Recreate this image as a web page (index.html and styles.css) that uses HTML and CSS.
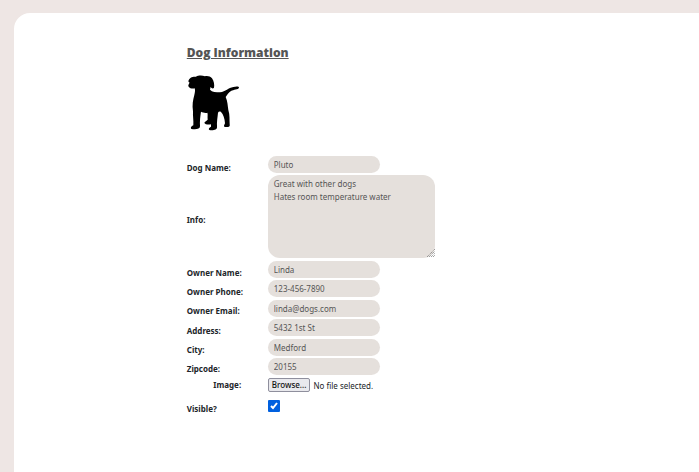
FILE: index.html
```html
<!DOCTYPE html>
<html lang="en">
<head>
<meta charset="utf-8">
<title>Dog Information</title>
<link rel="stylesheet" href="styles.css">
</head>
<body>
<main class="panel">
  <form class="dog-form">
    <h1 class="title">Dog Information</h1>
    <svg class="dog" viewBox="0 0 180 198" role="img" aria-label="Dog silhouette">
      <path d="M14 31 C18 21 27 20 36 20 C43 16 55 16 63 19 C70 17 79 19 84 25 C90 34 92 45 90 53 C87 57 82 55 80 50 L78 59 C84 66 96 67 108 67 C125 65 133 53 148 51 C157 48 166 49 165 53 C162 59 149 58 141 63 C134 68 129 75 125 81 C131 94 131 107 133 120 C138 135 136 150 137 162 C139 170 134 172 122 171 C118 168 121 165 123 160 C122 145 118 133 111 126 C108 124 104 124 102 128 C101 140 98 155 99 171 C100 179 88 182 76 180 C72 176 76 173 81 170 L81 163 C74 165 62 163 61 158 C63 154 68 153 71 149 C70 138 72 132 70 128 C63 130 56 127 51 125 C49 138 47 154 48 169 C48 178 35 179 22 177 C18 173 22 169 28 166 C29 151 26 136 27 124 C24 105 27 89 31 75 C33 66 34 61 32 55 C26 57 17 55 14 50 C11 46 15 41 17 38 C14 37 12 34 14 31 Z"/>
    </svg>
    <div class="fields">
      <div class="row">
        <label class="label" for="dog-name">Dog Name:</label>
        <input class="text" id="dog-name" type="text" value="Pluto">
      </div>
      <div class="row">
        <label class="label" for="info">Info:</label>
        <div class="area-wrap">
          <textarea class="text area" id="info">Great with other dogs
Hates room temperature water</textarea>
          <svg class="grip" viewBox="0 0 8 8" aria-hidden="true">
            <path d="M0 8 L8 0 M2 8 L8 2 M4 8 L8 4 M6 8 L8 6"/>
          </svg>
        </div>
      </div>
    </div>
    <div class="fields owner">
      <div class="row">
        <label class="label" for="owner-name">Owner Name:</label>
        <input class="text" id="owner-name" type="text" value="Linda">
      </div>
      <div class="row">
        <label class="label" for="owner-phone">Owner Phone:</label>
        <input class="text" id="owner-phone" type="text" value="123-456-7890">
      </div>
      <div class="row">
        <label class="label" for="owner-email">Owner Email:</label>
        <input class="text" id="owner-email" type="text" value="linda@dogs.com">
      </div>
      <div class="row">
        <label class="label" for="address">Address:</label>
        <input class="text" id="address" type="text" value="5432 1st St">
      </div>
      <div class="row">
        <label class="label" for="city">City:</label>
        <input class="text" id="city" type="text" value="Medford">
      </div>
      <div class="row">
        <label class="label" for="zipcode">Zipcode:</label>
        <input class="text" id="zipcode" type="text" value="20155">
      </div>
    </div>
    <div class="row image-row">
      <label class="label centered" for="image">Image:</label>
      <div class="file">
        <button class="browse" type="button" tabindex="-1">Browse...</button>
        <span>No file selected.</span>
        <input class="file-input" id="image" type="file">
      </div>
    </div>
    <div class="row">
      <label class="label" for="visible">Visible?</label>
      <span class="check">
        <input class="check-box" id="visible" type="checkbox" checked>
        <svg class="tick" viewBox="0 0 12 12" aria-hidden="true"><path d="M3 6 L5 8 L9 3"/></svg>
      </span>
    </div>
  </form>
</main>
</body>
</html>
```

FILE: styles.css
```css
* {
  box-sizing: border-box;
}

body {
  margin: 0;
  background: #eee6e4;
  color: #212529;
  font: 8px/13px "Noto Sans", "Open Sans", sans-serif;
}

.panel {
  min-height: calc(100vh - 13px);
  margin: 13px 0 0 14px;
  padding: 32px 0 32px calc(25% - 2px);
  border-top-left-radius: 16px;
  background: #fff;
}

.dog-form {
  display: flex;
  flex-direction: column;
  align-items: flex-start;
}

.title {
  margin: 0;
  color: #555;
  font-family: "Open Sans", sans-serif;
  font-size: 12px;
  font-weight: 800;
  line-height: 16px;
  text-decoration: underline;
}

.dog {
  width: 60px;
  height: 66px;
  margin: 9px 0 20px -3px;
}

.fields {
  display: flex;
  flex-direction: column;
  gap: 2px;
}

.owner {
  justify-content: space-between;
  min-height: 114px;
  margin-top: 3px;
}

.row {
  display: grid;
  grid-template-columns: 81px auto;
  align-items: center;
}

.label {
  padding-top: 5px;
  font-weight: 700;
  line-height: 11px;
}

.centered {
  padding: 0 0 2px;
  text-align: center;
}

.text {
  display: block;
  width: 112px;
  height: 17px;
  margin: 0;
  padding: 0 6px;
  border: 0;
  border-radius: 12px;
  background: #e5e0dc;
  color: #555;
  font: inherit;
}

.area-wrap {
  position: relative;
}

.area {
  width: 167px;
  height: 83px;
  padding: 2px 6px;
  resize: none;
}

.grip {
  position: absolute;
  right: 0;
  bottom: 1px;
  width: 8px;
  height: 8px;
  fill: none;
  stroke: #777;
  stroke-dasharray: 1 1;
}

.image-row {
  margin: 3px 0 6px;
}

.file {
  position: relative;
  display: flex;
  align-items: center;
  gap: 3px;
}

.browse {
  height: 14px;
  padding: 0 3px;
  border: 1px solid #8f8f9d;
  border-radius: 2px;
  background: #e9e9ed;
  color: #111;
  font: inherit;
  font-weight: 500;
  line-height: 12px;
}

.file-input {
  position: absolute;
  inset: 0;
  width: 100%;
  opacity: 0;
}

.check {
  position: relative;
  width: 12px;
  height: 12px;
}

.check-box {
  display: block;
  width: 12px;
  height: 12px;
  margin: 0;
  border-radius: 1px;
  background: #0060df;
  appearance: none;
}

.tick {
  position: absolute;
  inset: 0;
  fill: none;
  stroke: #fff;
  stroke-width: 2;
  pointer-events: none;
}
```
